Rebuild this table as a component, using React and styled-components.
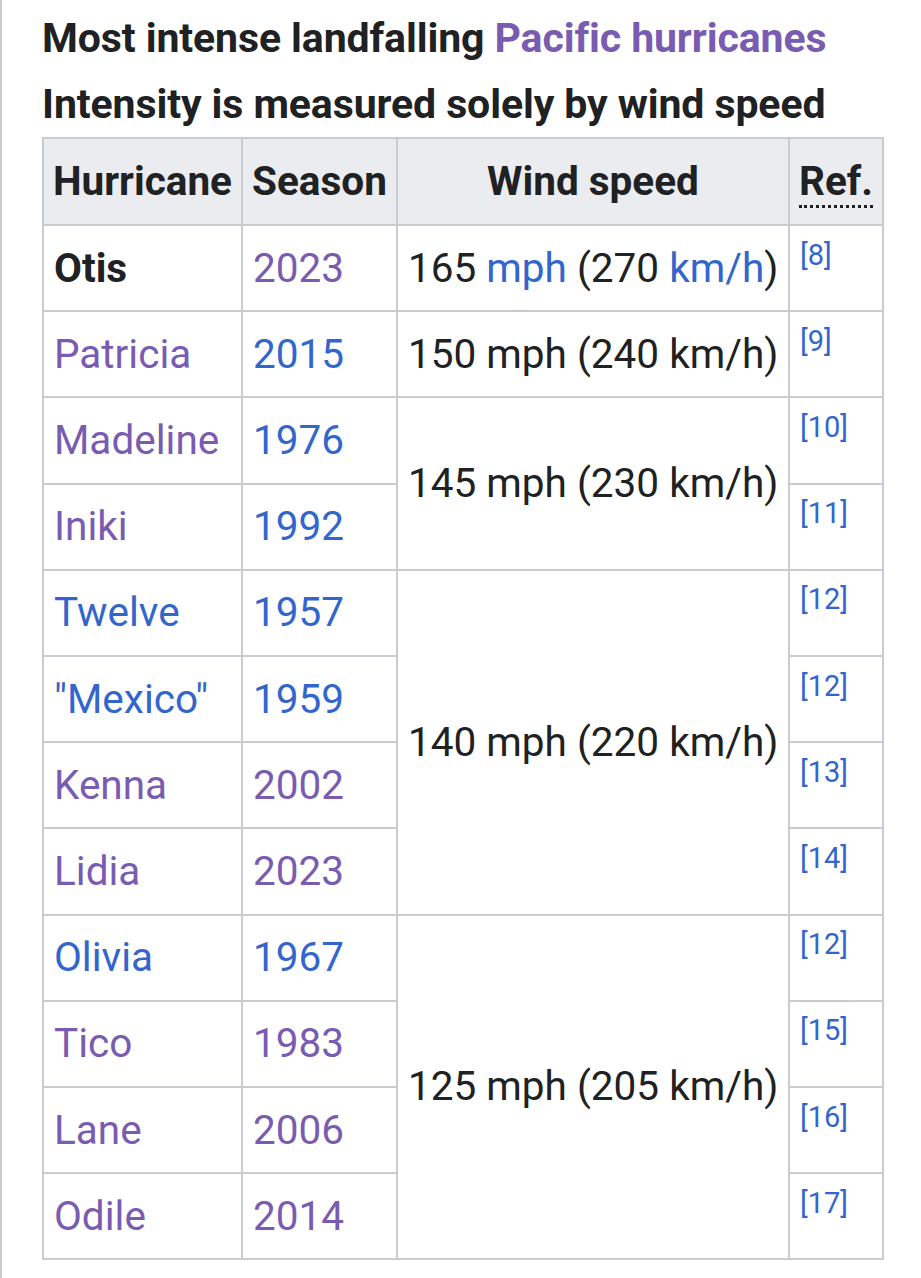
import React from 'react';
import styled, { createGlobalStyle } from 'styled-components';

const GlobalStyle = createGlobalStyle`
  html, body {
    margin: 0;
    padding: 0;
    background: #ffffff;
  }
  body {
    font-family: Roboto, "Liberation Sans", Arial, sans-serif;
    color: #202122;
  }
`;

const Page = styled.div`
  min-height: 1278px;
  border-left: 2px solid #c8ccd1;
  padding: 5px 0 0 40px;
  box-sizing: border-box;
`;

const Table = styled.table`
  border-collapse: collapse;
  table-layout: fixed;
  width: 840px;
  font-size: 40.5px;
  line-height: 1.6;
`;

const Caption = styled.caption`
  text-align: left;
  font-weight: 700;
  font-size: 41px;
  line-height: 66px;
  padding-bottom: 0;
  letter-spacing: -0.1px;
  white-space: nowrap;
`;

const HeadCell = styled.th`
  background: #eaecf0;
  border: 2px solid #c8ccd1;
  font-weight: 700;
  text-align: center;
  padding: 9px 6px;
  height: 67px;
  white-space: nowrap;
`;

const Cell = styled.td`
  border: 2px solid #c8ccd1;
  padding: 9px 10px;
  height: 66.2px;
  text-align: left;
  vertical-align: middle;
  white-space: nowrap;
  font-weight: ${p => (p.$bold ? 700 : 400)};
`;

const Abbr = styled.abbr`
  text-decoration: none;
  border-bottom: 3px dotted #202122;
  cursor: help;
`;

const Link = styled.a`
  color: ${p => (p.$visited ? '#795cb2' : '#3366cc')};
  text-decoration: none;
`;

const RefCell = styled(Cell)`
  padding-left: 10px;
`;

const Ref = styled.sup`
  font-size: 29px;
  line-height: 1;
  vertical-align: 17px;
  color: #3366cc;
`;

const rows = [
  { name: 'Otis', bold: true, year: '2023', yearV: true, ref: 8, wind: { text: 'first', span: 1 } },
  { name: 'Patricia', nameV: true, year: '2015', yearV: false, ref: 9, wind: { text: '150 mph (240 km/h)', span: 1 } },
  { name: 'Madeline', nameV: true, year: '1976', yearV: false, ref: 10, wind: { text: '145 mph (230 km/h)', span: 2 } },
  { name: 'Iniki', nameV: true, year: '1992', yearV: false, ref: 11 },
  { name: 'Twelve', nameV: false, year: '1957', yearV: false, ref: 12, wind: { text: '140 mph (220 km/h)', span: 4 } },
  { name: '"Mexico"', nameV: false, year: '1959', yearV: false, ref: 12 },
  { name: 'Kenna', nameV: true, year: '2002', yearV: true, ref: 13 },
  { name: 'Lidia', nameV: true, year: '2023', yearV: true, ref: 14 },
  { name: 'Olivia', nameV: false, year: '1967', yearV: false, ref: 12, wind: { text: '125 mph (205 km/h)', span: 4 } },
  { name: 'Tico', nameV: true, year: '1983', yearV: true, ref: 15 },
  { name: 'Lane', nameV: true, year: '2006', yearV: true, ref: 16 },
  { name: 'Odile', nameV: true, year: '2014', yearV: true, ref: 17 },
];

const WindText = ({ text }) => {
  if (text === 'first') {
    return (
      <>
        165 <Link href="#">mph</Link> (270 <Link href="#">km/h</Link>)
      </>
    );
  }
  return text;
};

export default function App() {
  return (
    <>
      <GlobalStyle />
      <Page>
        <Table>
          <Caption>
            Most intense landfalling <Link href="#" $visited>Pacific hurricanes</Link>
            <br />
            Intensity is measured solely by wind speed
          </Caption>
          <colgroup>
            <col style={{ width: 199 }} />
            <col style={{ width: 155 }} />
            <col style={{ width: 392 }} />
            <col style={{ width: 94 }} />
          </colgroup>
          <thead>
            <tr>
              <HeadCell>Hurricane</HeadCell>
              <HeadCell>Season</HeadCell>
              <HeadCell>Wind speed</HeadCell>
              <HeadCell>
                <Abbr title="Reference">Ref.</Abbr>
              </HeadCell>
            </tr>
          </thead>
          <tbody>
            {rows.map((r, i) => (
              <tr key={i}>
                <Cell $bold={r.bold}>
                  {r.bold ? r.name : <Link href="#" $visited={r.nameV}>{r.name}</Link>}
                </Cell>
                <Cell>
                  <Link href="#" $visited={r.yearV}>{r.year}</Link>
                </Cell>
                {r.wind && (
                  <Cell rowSpan={r.wind.span}>
                    <WindText text={r.wind.text} />
                  </Cell>
                )}
                <RefCell>
                  <Ref>[{r.ref}]</Ref>
                </RefCell>
              </tr>
            ))}
          </tbody>
        </Table>
      </Page>
    </>
  );
}
